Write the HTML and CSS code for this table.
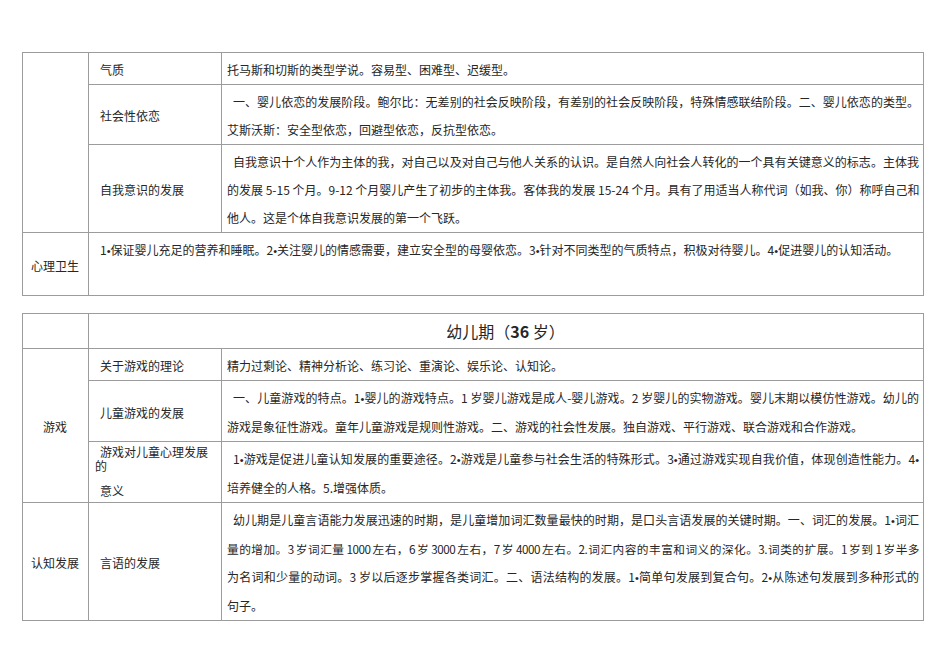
FILE: index.html
```html
<!DOCTYPE html>
<html lang="zh">
<head>
<meta charset="utf-8">
<title>儿童心理发展</title>
<link rel="stylesheet" href="styles.css">
</head>
<body>
<div class="page">
  <table class="grid">
    <colgroup><col class="c1"><col class="c2"><col class="c3"></colgroup>
    <tr>
      <td rowspan="3" class="lead"></td>
      <td class="label">气质</td>
      <td class="body"><p class="ln last">托马斯和切斯的类型学说。容易型、困难型、迟缓型。</p></td>
    </tr>
    <tr>
      <td class="label">社会性依恋</td>
      <td class="body">
        <p class="ln ind">一、婴儿依恋的发展阶段。鲍尔比：无差别的社会反映阶段，有差别的社会反映阶段，特殊情感联结阶段。二、婴儿依恋的类型。</p>
        <p class="ln last">艾斯沃斯：安全型依恋，回避型依恋，反抗型依恋。</p>
      </td>
    </tr>
    <tr>
      <td class="label">自我意识的发展</td>
      <td class="body">
        <p class="ln ind">自我意识十个人作为主体的我，对自己以及对自己与他人关系的认识。是自然人向社会人转化的一个具有关键意义的标志。主体我</p>
        <p class="ln">的发展 5-15 个月。9-12 个月婴儿产生了初步的主体我。客体我的发展 15-24 个月。具有了用适当人称代词（如我、你）称呼自己和</p>
        <p class="ln last">他人。这是个体自我意识发展的第一个飞跃。</p>
      </td>
    </tr>
    <tr class="tall">
      <td class="lead">心理卫生</td>
      <td colspan="2" class="label top nowrap">1<span class="dot">•</span>保证婴儿充足的营养和睡眠。2<span class="dot">•</span>关注婴儿的情感需要，建立安全型的母婴依恋。3<span class="dot">•</span>针对不同类型的气质特点，积极对待婴儿。4<span class="dot">•</span>促进婴儿的认知活动。</td>
    </tr>
  </table>

  <table class="grid">
    <colgroup><col class="c1"><col class="c2"><col class="c3"></colgroup>
    <tr>
      <td class="lead"></td>
      <td colspan="2" class="head">幼儿期（<b>36</b> 岁）</td>
    </tr>
    <tr>
      <td rowspan="3" class="lead">游戏</td>
      <td class="label">关于游戏的理论</td>
      <td class="body"><p class="ln last">精力过剩论、精神分析论、练习论、重演论、娱乐论、认知论。</p></td>
    </tr>
    <tr>
      <td class="label">儿童游戏的发展</td>
      <td class="body">
        <p class="ln ind">一、儿童游戏的特点。1<span class="dot">•</span>婴儿的游戏特点。1 岁婴儿游戏是成人-婴儿游戏。2 岁婴儿的实物游戏。婴儿末期以模仿性游戏。幼儿的</p>
        <p class="ln last">游戏是象征性游戏。童年儿童游戏是规则性游戏。二、游戏的社会性发展。独自游戏、平行游戏、联合游戏和合作游戏。</p>
      </td>
    </tr>
    <tr>
      <td class="label top">
        <div class="tight">游戏对儿童心理发展的</div>
        <div class="tight gap">意义</div>
      </td>
      <td class="body">
        <p class="ln ind">1<span class="dot">•</span>游戏是促进儿童认知发展的重要途径。2<span class="dot">•</span>游戏是儿童参与社会生活的特殊形式。3<span class="dot">•</span>通过游戏实现自我价值，体现创造性能力。4<span class="dot">•</span></p>
        <p class="ln last">培养健全的人格。5.增强体质。</p>
      </td>
    </tr>
    <tr>
      <td class="lead">认知发展</td>
      <td class="label">言语的发展</td>
      <td class="body">
        <p class="ln ind">幼儿期是儿童言语能力发展迅速的时期，是儿童增加词汇数量最快的时期，是口头言语发展的关键时期。一、词汇的发展。1<span class="dot">•</span>词汇</p>
        <p class="ln snug">量的增加。3 岁词汇量 1000 左右，6 岁 3000 左右，7 岁 4000 左右。2.词汇内容的丰富和词义的深化。3.词类的扩展。1 岁到 1 岁半多</p>
        <p class="ln">为名词和少量的动词。3 岁以后逐步掌握各类词汇。二、语法结构的发展。1<span class="dot">•</span>简单句发展到复合句。2<span class="dot">•</span>从陈述句发展到多种形式的</p>
        <p class="ln last">句子。</p>
      </td>
    </tr>
  </table>
</div>
</body>
</html>
```
FILE: styles.css
```css
html, body {
  margin: 0;
  background: #ffffff;
}

body {
  font-family: "Noto Sans CJK SC", sans-serif;
  font-size: 12px;
  color: #262626;
}

.page {
  padding: 52px 0 0 22px;
  display: flex;
  flex-direction: column;
  align-items: flex-start;
  gap: 17px;
}

.grid {
  border-collapse: collapse;
  table-layout: fixed;
  width: 901px;
}

.c1 { width: 66px; }
.c2 { width: 133px; }
.c3 { width: 702px; }

.grid td {
  border: 1px solid #9c9c9c;
  padding: 3px 4px 0 5px;
  line-height: 28px;
  vertical-align: middle;
}

.grid td.lead {
  text-align: center;
  padding-left: 3px;
}

.grid td.label {
  padding-left: 6px;
  padding-right: 5px;
  text-indent: 5px;
}

.grid td.top {
  vertical-align: top;
}

.grid td.nowrap {
  white-space: nowrap;
}

.grid td.head {
  text-align: center;
  font-size: 16px;
  padding-top: 3px;
  padding-bottom: 3px;
  padding-right: 6px;
}

.head b {
  font-weight: 700;
}

.dot {
  font-family: "Liberation Sans", sans-serif;
  font-size: 11px;
}

.ln {
  margin: 0;
  white-space: nowrap;
  text-align: justify;
  text-align-last: justify;
}

.ln.last {
  text-align-last: left;
}

.ln.ind {
  text-indent: 6px;
}

.ln.snug {
  font-size: 11.7px;
  letter-spacing: -0.5px;
  word-spacing: -1px;
}

.tight {
  line-height: 14px;
}

.tight.gap {
  margin-top: 11px;
}

.tall {
  height: 63px;
}
```
